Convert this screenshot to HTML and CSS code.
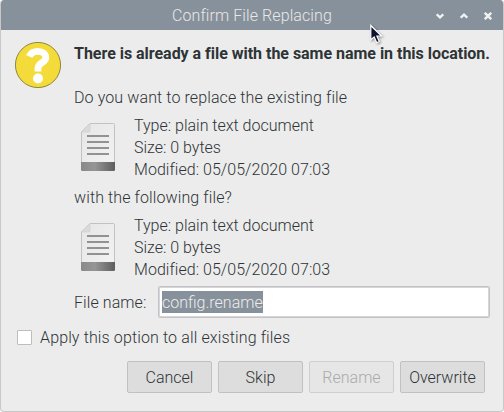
FILE: index.html
```html
<!DOCTYPE html>
<html lang="en">
<head>
<meta charset="utf-8">
<title>Confirm File Replacing</title>
<link rel="stylesheet" href="styles.css">
</head>
<body>
<svg class="defs" width="0" height="0" aria-hidden="true">
  <defs>
    <linearGradient id="page" x1="0" y1="0" x2="1" y2="1"><stop offset="0" stop-color="#e6e6e6"/><stop offset="1" stop-color="#f3f3f3"/></linearGradient>
    <linearGradient id="base" x1="0" y1="0" x2="1" y2="0"><stop offset="0" stop-color="#898989"/><stop offset=".4" stop-color="#969696"/><stop offset="1" stop-color="#5e5e5e"/></linearGradient>
    <symbol id="doc" viewBox="0 0 34 48">
      <path d="M.5 9 9 .5H32.5Q33.5 .5 33.5 1.5V46.5Q33.5 47.5 32.5 47.5H1.5Q.5 47.5 .5 46.5Z" fill="url(#page)" stroke="#c2c2c2"/>
      <path d="M0 39H34V46.500Q34 48 32.500 48H1.500Q0 48 0 46.500Z" fill="url(#base)"/>
      <path d="M.5 9 9 .5V7.500Q9 9 7.500 9Z" fill="#dadada" stroke="#cecece" stroke-width=".6"/>
      <path d="M6 13H28M6 19H28M6 25H28M6 31H28" stroke="#929292" stroke-width="2"/>
    </symbol>
  </defs>
</svg>
<div class="dialog">
  <header class="titlebar">
    <h1 class="title">Confirm File Replacing</h1>
    <div class="controls">
      <svg width="8" height="8" viewBox="0 0 8 8"><path d="M.7 2.300 4 5.300 7.300 2.300"/></svg>
      <svg width="8" height="8" viewBox="0 0 8 8"><path d="M.7 5.700 4 2.700 7.300 5.700"/></svg>
      <svg width="8" height="8" viewBox="0 0 8 8"><path d="M.8 .8 7.200 7.200M7.200 .8 .8 7.200"/></svg>
    </div>
  </header>
  <main class="content">
    <section class="message">
      <svg class="question" width="46" height="46" viewBox="0 0 46 46">
        <circle cx="23" cy="23" r="22.600" fill="#f3dc3a" stroke="#766d32" stroke-width=".8"/>
        <path d="M14.300 14.500C15.800 10.700 18.800 9.300 22.800 9.300C27.800 9.300 30.800 12 30.800 15.700C30.800 20.700 23.300 20.500 23 25.800V29.500" fill="none" stroke="#fff" stroke-width="6.800"/>
        <circle cx="23" cy="36.500" r="5" fill="#fff"/>
      </svg>
      <div class="details">
        <h2 class="heading">There is already a file with the same name in this location.</h2>
        <p class="prompt">Do you want to replace the existing file</p>
        <div class="file">
          <svg width="34" height="48"><use href="#doc"/></svg>
          <div class="info"><p>Type: plain text document</p><p>Size: 0 bytes</p><p class="date">Modified: 05/05/2020 07:03</p></div>
        </div>
        <p class="prompt">with the following file?</p>
        <div class="file">
          <svg width="34" height="48"><use href="#doc"/></svg>
          <div class="info"><p>Type: plain text document</p><p>Size: 0 bytes</p><p class="date">Modified: 05/05/2020 07:03</p></div>
        </div>
        <div class="name-row"><span class="label">File name:</span><div class="entry"><span class="selected">config.rename</span></div></div>
      </div>
    </section>
    <label class="apply"><span class="checkbox"></span><span class="apply-text">Apply this option to all existing files</span></label>
    <footer class="actions">
      <button class="button">Cancel</button>
      <button class="button">Skip</button>
      <button class="button" disabled>Rename</button>
      <button class="button">Overwrite</button>
    </footer>
  </main>
  <svg class="pointer" width="14" height="21" viewBox="0 0 14 21"><path d="M.8 1.500V15.700L4.200 13 6.700 18.700 9.300 17.500 6.900 12H11.500Z" fill="#10122e" stroke="#fff" stroke-width="1.200"/></svg>
</div>
</body>
</html>
```

FILE: styles.css
```css
* { box-sizing: border-box; margin: 0; padding: 0; }
body {
  width: 504px; height: 412px; overflow: hidden; background: #fff;
  color: #2e3436; font: 300 16px/22px Roboto, sans-serif; white-space: nowrap;
}
.defs { position: absolute; }
svg { display: block; flex: none; }
.dialog {
  position: relative; width: 504px; height: 412px; background: #ececec;
  border: 1px solid #c8c8c8; border-top: 0; border-radius: 4px; overflow: hidden;
}
.titlebar {
  display: flex; align-items: center; height: 30px; margin: 0 -1px;
  padding: 2px 12px 0 172px; background: #87919b; color: #e8e8e8;
}
.title { flex: 1; font-size: 16px; font-weight: 300; line-height: 22px; letter-spacing: .09px; }
.controls { display: flex; gap: 16px; }
.controls svg { fill: none; stroke: #f2f2f2; stroke-width: 2.400; }
.content { padding: 12px 13px 0 14px; }
.message { display: flex; gap: 13px; height: 276px; }
.details { width: 416px; }
.heading { height: 44px; padding-top: 1px; font-size: 16px; font-weight: 700; line-height: 22px; letter-spacing: -.025px; }
.prompt { height: 28px; padding-top: 1px; letter-spacing: .11px; }
.file { display: flex; height: 72px; padding: 9px 0 0 7px; gap: 19px; }
.info { margin-top: -8px; }
.date { letter-spacing: .04px; }
.name-row { display: flex; align-items: center; height: 32px; }
.label { width: 84px; padding-top: 2px; letter-spacing: .08px; }
.entry {
  display: flex; align-items: center; width: 332px; height: 32px; padding: 0 3px;
  background: #fff; border: 1px solid #c3c3c6; border-radius: 2px; box-shadow: inset 0 0 0 1px #d6d6da;
}
.selected { height: 22px; line-height: 24px; background: #87919b; color: #ececec; }
.apply { display: flex; align-items: center; gap: 8px; height: 22px; margin-top: 8px; padding-left: 2px; }
.apply-text { padding-top: 2px; letter-spacing: .13px; }
.checkbox { width: 15px; height: 15px; background: #fff; border: 1px solid #bdbdbd; border-radius: 1px; }
.actions { display: flex; justify-content: flex-end; gap: 6px; margin-top: 13px; padding-right: 5px; }
.button {
  width: 85px; height: 32px; padding-top: 1px; background: #ddd; border: 1px solid #c1c1c4; border-radius: 2px;
  color: #2e3436; font: inherit;
}
.button:disabled { background: #e6e6e6; border-color: #ceced0; color: #a9abac; }
.pointer { position: absolute; left: 369px; top: 24px; filter: drop-shadow(1px 1px 1px rgb(0 0 0 / 40%)); }
```
